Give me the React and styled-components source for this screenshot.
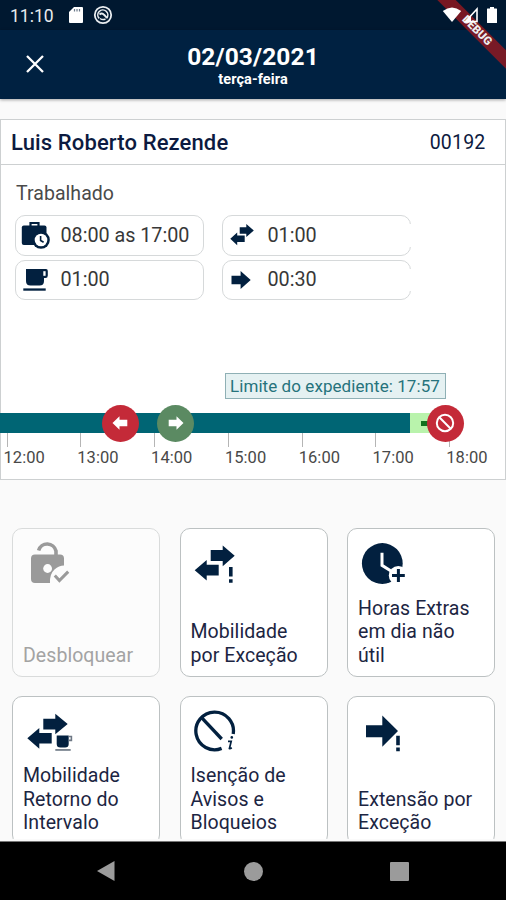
import React from 'react'
import styled, { createGlobalStyle } from 'styled-components'

const NAVY = '#02203f'

const hours = ['12:00', '13:00', '14:00', '15:00', '16:00', '17:00', '18:00']

const App = () => {
  return (
    <Screen>
      <GlobalStyle />
      <StatusBar>
        <Clock>11:10</Clock>
        <SdIcon />
        <SyncIcon />
        <StatusRight>
          <WifiIcon />
          <SignalIcon />
          <BatteryIcon />
        </StatusRight>
      </StatusBar>
      <AppBar>
        <CloseButton><CloseIcon /></CloseButton>
        <TitleWrap>
          <Title>02/03/2021</Title>
          <Weekday>terça-feira</Weekday>
        </TitleWrap>
      </AppBar>
      <DebugBanner>DEBUG</DebugBanner>
      <Content>
        <Journey />
        <Actions>
          <ActionCard disabled icon={<UnlockIcon />} label={['Desbloquear']} />
          <ActionCard icon={<MobilityIcon />} label={['Mobilidade', 'por Exceção']} />
          <ActionCard icon={<OvertimeIcon />} label={['Horas Extras', 'em dia não', 'útil']} />
          <ActionCard icon={<MobilityCupIcon />} label={['Mobilidade', 'Retorno do', 'Intervalo']} />
          <ActionCard icon={<ExemptionIcon />} label={['Isenção de', 'Avisos e', 'Bloqueios']} />
          <ActionCard icon={<ExtensionIcon />} label={['Extensão por', 'Exceção']} />
        </Actions>
      </Content>
      <NavBar>
        <svg width="20" height="22" viewBox="0 0 20 22"><path d="M1 11L18.5 1V21Z" fill="#9b9b9b" /></svg>
        <NavHome />
        <NavRecent />
      </NavBar>
    </Screen>
  )
}
export default App

const GlobalStyle = createGlobalStyle`
  body {
    margin: 0;
    font-family: Roboto, sans-serif;
  }
  svg {
    display: block;
    flex-shrink: 0;
  }
`
const Screen = styled.div`
  position: relative;
  width: 506px;
  height: 900px;
  display: flex;
  flex-direction: column;
  background-color: #fafafa;
  overflow: hidden;
`

// Status bar
const StatusBar = styled.div`
  height: 30px;
  padding: 0 8px 0 10px;
  box-sizing: border-box;
  display: flex;
  align-items: center;
  flex-shrink: 0;
  background-color: #001830;
`
const Clock = styled.span`
  width: 58px;
  padding-top: 1px;
  font-size: 17.5px;
  color: #e8ebee;
`
// system icons stay above the debug banner
const StatusRight = styled.div`
  position: relative;
  z-index: 3;
  margin-left: auto;
  display: flex;
  align-items: center;
`

// App bar
const AppBar = styled.div`
  height: 69px;
  display: grid;
  grid-template-columns: 70px 1fr 70px;
  flex-shrink: 0;
  z-index: 1;
  background-color: #002141;
  box-shadow: 0 1px 3px rgba(0, 0, 0, .35);
`
const CloseButton = styled.div`
  padding: 24px 0 0 25px;
`
const TitleWrap = styled.div`
  padding-top: 12px;
  text-align: center;
  color: #fff;
`
const Title = styled.div`
  font-weight: 700;
  font-size: 24.5px;
  line-height: 29px;
  letter-spacing: 0.1px;
`
const Weekday = styled.div`
  font-weight: 700;
  font-size: 14.5px;
  line-height: 17px;
  letter-spacing: 0.1px;
`
const DebugBanner = styled.div`
  position: absolute;
  top: 23.5px;
  right: -41px;
  z-index: 2;
  width: 140px;
  height: 13px;
  transform: rotate(45deg);
  text-align: center;
  font-weight: 900;
  font-size: 11.5px;
  line-height: 13px;
  color: #eee;
  background-color: rgba(160, 24, 30, .75);
`

const Content = styled.div`
  height: 742px;
  display: flex;
  flex-direction: column;
  overflow: hidden;
`

// Journey panel
const Journey = () => {
  return (
    <Panel>
      <PanelHead>
        <Name>Luis Roberto Rezende</Name>
        <Code>00192</Code>
      </PanelHead>
      <PanelLabel>Trabalhado</PanelLabel>
      <Pills>
        <Pill><WorkIcon />08:00 as 17:00</Pill>
        <Pill $open><SwapIcon />01:00</Pill>
        <Pill><CupIcon />01:00</Pill>
        <Pill $open><ArrowIcon />00:30</Pill>
      </Pills>
      <Limit>Limite do expediente: 17:57</Limit>
      <Timeline>
        <Bar>
          <Worked />
          <Extra />
        </Bar>
        <Marker $x={120} $color="#c42a38">
          <svg width="18" height="16" viewBox="0 0 18 16"><path d="M1.5 8L8.5 1.2V4.8H16.3V11.2H8.5V14.8Z" fill="#fff" /></svg>
        </Marker>
        <Marker $x={175.5} $color="#5b8a62">
          <svg width="18" height="16" viewBox="0 0 18 16"><path d="M16.5 8L9.5 1.2V4.8H1.7V11.2H9.5V14.8Z" fill="#fff" /></svg>
        </Marker>
        <Marker $x={445} $color="#c42a38">
          <svg width="20" height="20" viewBox="0 0 20 20" fill="none" stroke="#fff" strokeWidth="2">
            <circle cx="10" cy="10" r="8.2" />
            <path d="M4.3 4.3L15.7 15.7" />
          </svg>
        </Marker>
      </Timeline>
      <Hours>
        {hours.map((hour) => <Hour key={hour}>{hour}</Hour>)}
      </Hours>
    </Panel>
  )
}

const Panel = styled.div`
  height: 361px;
  margin-top: 20px;
  box-sizing: border-box;
  border: 1px solid #cdd0d1;
  flex-shrink: 0;
  background-color: #fff;
`
const PanelHead = styled.div`
  height: 45px;
  padding: 0 19.5px 0 10px;
  box-sizing: border-box;
  display: flex;
  align-items: center;
  justify-content: space-between;
  border-bottom: 1px solid #cdd0d1;
  color: #0c1a40;
`
const Name = styled.span`
  font-weight: 500;
  font-size: 22px;
  letter-spacing: 0.13px;
`
const Code = styled.span`
  font-size: 19.5px;
  letter-spacing: 0.2px;
`
const PanelLabel = styled.div`
  margin: 17px 0 0 15px;
  font-size: 19.5px;
  line-height: 24px;
  letter-spacing: 0.05px;
  color: #4a4a4a;
`
const Pills = styled.div`
  margin: 9px 0 0 14px;
  display: grid;
  grid-template-columns: 189px 189px;
  grid-auto-rows: 40.5px;
  column-gap: 18px;
  row-gap: 4px;
`
const Pill = styled.div`
  position: relative;
  padding-left: 4px;
  box-sizing: border-box;
  display: flex;
  align-items: center;
  gap: 10.5px;
  border: 1px solid #d6d9da;
  border-radius: 10px;
  font-size: 19.8px;
  letter-spacing: -0.03px;
  color: #383838;

  &::after {
    display: ${({ $open }) => ($open ? 'block' : 'none')};
    content: '';
    position: absolute;
    top: 8px;
    bottom: 8px;
    right: -1px;
    width: 2px;
    background-color: #fff;
  }
`
const Limit = styled.div`
  width: 221px;
  height: 26px;
  margin: 73px 0 0 224px;
  padding-left: 4px;
  box-sizing: border-box;
  border: 1px solid #8fb0b5;
  font-size: 17px;
  line-height: 25px;
  letter-spacing: 0.07px;
  white-space: nowrap;
  color: #26737c;
  background-color: #e5f1f2;
`
const Timeline = styled.div`
  position: relative;
  margin: 14px 0 0 -1px;
`
const Bar = styled.div`
  height: 20px;
  display: flex;
`
const Worked = styled.div`
  width: 410px;
  background-color: #006574;
`
const Extra = styled.div`
  width: 35px;
  padding: 8px 0 0 11px;
  box-sizing: border-box;
  background-color: #b9f3ac;
  &::before {
    display: block;
    content: '';
    width: 12px;
    height: 5px;
    background-color: #13711f;
  }
`
const Marker = styled.div`
  position: absolute;
  top: -8.5px;
  left: ${({ $x }) => $x - 18.5}px;
  width: 37px;
  height: 37px;
  border-radius: 50%;
  display: flex;
  align-items: center;
  justify-content: center;
  background-color: ${({ $color }) => $color};
`
const Hours = styled.div`
  padding-left: 2.5px;
  display: flex;
`
const Hour = styled.div`
  width: 73.8px;
  flex-shrink: 0;
  font-size: 16.5px;
  line-height: 22px;
  letter-spacing: 0.05px;
  color: #484848;
  &::before {
    display: block;
    content: '';
    width: 1px;
    height: 14px;
    margin-left: 3px;
    background-color: #b5b5b5;
  }
`

// Action grid
const ActionCard = ({ icon, label, disabled }) => {
  return (
    <Card $disabled={disabled}>
      <CardIcon>{icon}</CardIcon>
      <CardLabel>
        {label.map((line) => <div key={line}>{line}</div>)}
      </CardLabel>
    </Card>
  )
}

const Actions = styled.div`
  height: 311px;
  margin: 48px 0 0 12px;
  display: grid;
  grid-template-columns: repeat(3, 148px);
  grid-auto-rows: 149px;
  column-gap: 19.5px;
  row-gap: 18.5px;
  overflow: hidden;
`
const Card = styled.div`
  padding: 7px 0 9px 10px;
  box-sizing: border-box;
  display: flex;
  flex-direction: column;
  justify-content: space-between;
  border: 1px solid ${({ $disabled }) => ($disabled ? '#d9dbdb' : '#bcc1c2')};
  border-radius: 10px;
  color: ${({ $disabled }) => ($disabled ? '#a3a3a3' : '#1c2542')};
  background-color: ${({ $disabled }) => ($disabled ? '#fcfcfc' : '#fff')};
`
const CardIcon = styled.div`
  padding-left: 3px;
`
const CardLabel = styled.div`
  font-size: 19.5px;
  line-height: 23.5px;
  letter-spacing: 0.06px;
  white-space: nowrap;
`

// Android navigation
const NavBar = styled.div`
  height: 59px;
  padding: 0 97px 0 96px;
  box-sizing: border-box;
  display: flex;
  align-items: center;
  justify-content: space-between;
  flex-shrink: 0;
  border-top: 1px solid #777;
  background-color: #000;
`
const NavHome = styled.div`
  width: 19px;
  height: 19px;
  border-radius: 50%;
  background-color: #9b9b9b;
`
const NavRecent = styled.div`
  width: 19px;
  height: 19px;
  border-radius: 1px;
  background-color: #9b9b9b;
`

// Icons
const SdIcon = () => (
  <svg width="16" height="18" viewBox="0 0 16 18">
    <path d="M6 1H14Q15 1 15 2V16Q15 17 14 17H2Q1 17 1 16V6Z" fill="#fff" />
    <path d="M6.5 3V5.5M9 3V5.5M11.5 3V5.5" stroke="#6c7a8a" strokeWidth="1.2" />
  </svg>
)
const SyncIcon = () => (
  <svg width="20" height="20" viewBox="0 0 20 20" fill="none" stroke="#e9edf0" style={{ marginLeft: 9 }}>
    <circle cx="10" cy="10" r="8.2" strokeWidth="1.8" />
    <path d="M6.2 13.4A5 5 0 1 1 13.6 13.2" strokeWidth="1.6" />
    <path d="M6.5 9.5C9 7.5 10.5 8.5 14 13" strokeWidth="2" />
    <path d="M7 13.5Q10 15.5 12.5 13.8" strokeWidth="1.4" />
  </svg>
)
const WifiIcon = () => (
  <svg width="20" height="18" viewBox="0 0 20 18">
    <path d="M10 16L0.8 5Q10 -2 19.2 5Z" fill="#fff" />
  </svg>
)
const SignalIcon = () => (
  <svg width="24" height="18" viewBox="0 0 24 18">
    <path d="M15 3V15.5H3.5Z" fill="none" stroke="#fff" strokeWidth="1.6" />
    <path d="M2 16.5L9 9.5V16.5Z" fill="#fff" />
  </svg>
)
const BatteryIcon = () => (
  <svg width="12" height="18" viewBox="0 0 12 18">
    <path d="M4 1H8V2.5H10.5Q11 2.5 11 3V16.5Q11 17 10.5 17H1.5Q1 17 1 16.5V3Q1 2.5 1.5 2.5H4Z" fill="#fff" />
  </svg>
)
const CloseIcon = () => (
  <svg width="20" height="20" viewBox="0 0 20 20">
    <path d="M2 2L18 18M18 2L2 18" stroke="#fff" strokeWidth="2.3" />
  </svg>
)
const WorkIcon = () => (
  <svg width="30" height="30" viewBox="0 0 30 30" fill={NAVY}>
    <path d="M10.5 6V3H18.5V6" fill="none" stroke={NAVY} strokeWidth="2.2" />
    <rect x="1.8" y="5.5" width="24.7" height="19.5" rx="2" />
    <circle cx="21" cy="20" r="8.8" />
    <circle cx="21" cy="20" r="6.3" fill="#fff" />
    <path d="M20.6 16V20.5L23.6 22.3" fill="none" stroke={NAVY} strokeWidth="1.6" />
  </svg>
)
const CupIcon = () => (
  <svg width="30" height="30" viewBox="0 0 30 30" fill={NAVY}>
    <path d="M6 4H26Q27.8 4 27.8 6V10.5Q27.8 13 25.5 13H24V16Q24 20.5 19.5 20.5H10.5Q6 20.5 6 16Z" />
    <rect x="23.3" y="6.2" width="2.3" height="4.6" fill="#fff" />
    <rect x="3.3" y="23.4" width="22.4" height="2.3" />
  </svg>
)
const SwapIcon = () => (
  <svg width="30" height="30" viewBox="0 0 30 30" fill={NAVY}>
    <path d="M12.7 7.2H19.3V4.1L26.8 10.5L19.3 16.9V13.8H12.7Z" />
    <path d="M3.3 18.8L10.2 12.4V15.5H17.7V22.1H10.2V25.2Z" />
  </svg>
)
const ArrowIcon = () => (
  <svg width="30" height="30" viewBox="0 0 30 30" fill={NAVY}>
    <path d="M4.5 10.8H13.6V6L23.7 15L13.6 24V19.2H4.5Z" />
  </svg>
)
const UnlockIcon = () => (
  <svg width="48" height="48" viewBox="0 0 48 48" fill="#9a9a9a">
    <path d="M12.6 14.5A9 9 0 0 1 30 15V20" fill="none" stroke="#9a9a9a" strokeWidth="3.6" />
    <path d="M9 18.5H34Q38 18.5 38 22.5V29.5Q33 29.5 28.5 33.5Q23.5 38 24 47H9Q5 47 5 43V22.5Q5 18.5 9 18.5Z" />
    <circle cx="21.6" cy="32.5" r="4.4" fill="#fcfcfc" />
    <path d="M28.8 39.6L33.4 44.6L42.2 35.6" fill="none" stroke="#9a9a9a" strokeWidth="3" />
  </svg>
)
const MobilityIcon = () => (
  <svg width="48" height="48" viewBox="0 0 48 48" fill={NAVY}>
    <path d="M16.7 14.1H28.7V9.4L40.7 19.8L28.7 30.2V25H16.7Z" />
    <path d="M0.7 34.3L12.7 24V28.8H24.7V39.6H12.7V44.6Z" />
    <path d="M35 31H38.6V40.6H35ZM35 43.2H38.6V46.7H35Z" />
  </svg>
)
const OvertimeIcon = () => (
  <svg width="48" height="48" viewBox="0 0 48 48" fill={NAVY}>
    <circle cx="21.3" cy="27.5" r="20.4" />
    <path d="M21 16.8V29.3L30 35" fill="none" stroke="#fff" strokeWidth="3" />
    <circle cx="37.3" cy="39.5" r="9.5" fill="#fff" />
    <path d="M31 39.5H43.8M37.4 33.1V45.9" fill="none" stroke={NAVY} strokeWidth="3" />
  </svg>
)
const MobilityCupIcon = () => (
  <svg width="48" height="48" viewBox="0 0 48 48" fill={NAVY}>
    <path d="M17.3 14.8H29.3V9.7L41.7 20L29.3 30.3V25.4H17.3Z" />
    <path d="M1.3 34.3L13.3 24V29.1H25.7V39.6H13.3V44.7Z" />
    <path d="M30.7 31.5H42.7V40Q42.7 43.6 39 43.6H34.5Q30.7 43.6 30.7 40Z" />
    <path d="M42.7 32.5H45.4V36.4H42.7" fill="none" stroke="#6d7784" strokeWidth="1.6" />
    <rect x="29.3" y="45.2" width="15.4" height="1.5" fill="#5c6877" />
  </svg>
)
const ExemptionIcon = () => (
  <svg width="48" height="48" viewBox="0 0 48 48" fill="none" stroke={NAVY} strokeWidth="3.3">
    <path d="M39.2 30A18.8 18.8 0 1 0 27.6 44.4" />
    <path d="M7.4 13.4L27.7 35" />
    <path d="M34 37.4H37.2L35.4 44.6Q36.2 45 37.8 43.8" strokeWidth="1.7" />
    <circle cx="37.8" cy="33.4" r="1.3" fill={NAVY} stroke="none" />
  </svg>
)
const ExtensionIcon = () => (
  <svg width="48" height="48" viewBox="0 0 48 48" fill={NAVY}>
    <path d="M5 21.2H21.3V11.5L37 27L21.3 42.7V33.2H5Z" />
    <path d="M35.2 31.7H38.8V41.2H35.2ZM35.2 43.6H38.8V47.2H35.2Z" />
  </svg>
)
